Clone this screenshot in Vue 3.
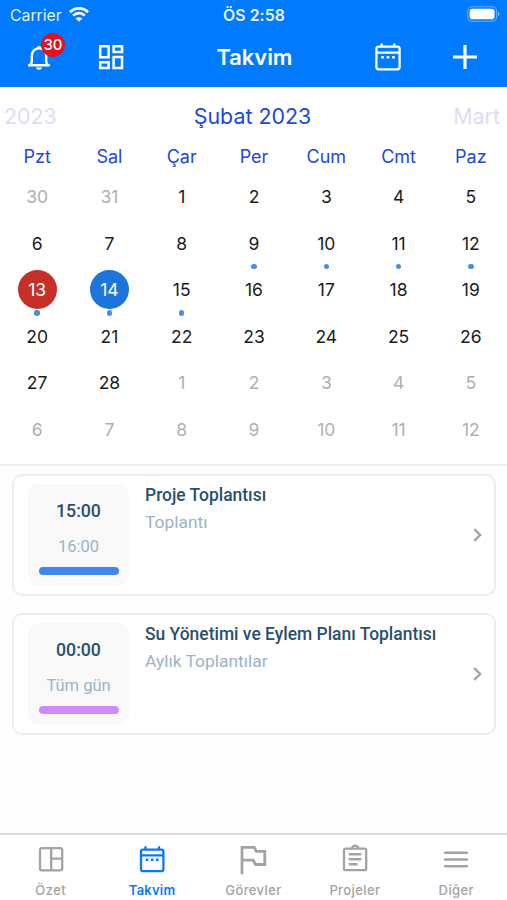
<script setup>
const weekdays = ['Pzt', 'Sal', 'Çar', 'Per', 'Cum', 'Cmt', 'Paz']

const range = (from, to) => Array.from({ length: to - from + 1 }, (_, i) => from + i)
const eventDays = [9, 10, 11, 12, 13, 14, 15]
const days = [
  ...range(30, 31).map((n) => ({ n, outside: true })),
  ...range(1, 28).map((n) => ({
    n,
    today: n === 13,
    selected: n === 14,
    dot: eventDays.includes(n),
  })),
  ...range(1, 12).map((n) => ({ n, outside: true })),
]

const events = [
  { start: '15:00', end: '16:00', title: 'Proje Toplantısı', kind: 'Toplantı', tone: 'blue' },
  { start: '00:00', end: 'Tüm gün', title: 'Su Yönetimi ve Eylem Planı Toplantısı', kind: 'Aylık Toplantılar', tone: 'violet' },
]

const tabs = [
  { id: 'summary', label: 'Özet' },
  { id: 'calendar', label: 'Takvim', active: true },
  { id: 'tasks', label: 'Görevler' },
  { id: 'projects', label: 'Projeler' },
  { id: 'more', label: 'Diğer' },
]
</script>

<template>
  <div class="screen">
    <header class="top">
      <div class="status">
        <div class="carrier">
          <span>Carrier</span>
          <svg class="wifi" width="20" height="15" viewBox="0 0 20 15" fill="none" stroke="#fff" stroke-width="2.7">
            <path d="M1 5.2C6 .2 14 .2 19 5.2M4.2 8.6c3.3-3.2 8.3-3.2 11.6 0" />
            <path d="M6.7 11.4c1.8-1.7 4.8-1.7 6.6 0L10 14.7z" fill="#fff" stroke="none" />
          </svg>
        </div>
        <span class="clock">ÖS 2:58</span>
        <svg class="battery" width="33" height="16" viewBox="0 0 33 16">
          <rect x=".8" y=".8" width="28.8" height="14.4" rx="4.4" fill="none" stroke="#fff" stroke-opacity=".4" stroke-width="1.1" />
          <rect x="2.6" y="2.8" width="25" height="10.4" rx="2.8" fill="#fff" />
          <path d="M31 5.7c1.9.7 1.9 3.9 0 4.6z" fill="#fff" fill-opacity=".45" />
        </svg>
      </div>
      <nav class="nav">
        <div class="bell">
          <svg width="24" height="28" viewBox="0 0 24 28" fill="none" stroke="#fff" stroke-width="2.4">
            <path d="M1.2 22.2h21.6M3.2 21.8c1.3-1 1.6-1.8 1.6-3.6v-5.6a7.2 7.4 0 0 1 14.4 0v5.6c0 1.8.3 2.6 1.6 3.6" />
            <path d="M9 24.4h6c-.4 3-5.6 3-6 0zM9.9 5a2.1 2.1 0 1 1 4.2 0z" fill="#fff" stroke="none" />
          </svg>
          <span class="badge">30</span>
        </div>
        <svg class="grid-icon" width="26" height="26" viewBox="0 0 26 26" fill="none" stroke="#fff" stroke-width="2.5">
          <path d="M2.2 2.2h8.4v11H2.2zM15.6 2.2H24v5.7h-8.4zM2.2 18.2h8.4v5.8H2.2zM15.6 13H24v11h-8.4z" />
        </svg>
        <h1>Takvim</h1>
        <svg class="cal-icon" width="26" height="30" viewBox="0 0 26 30" fill="none" stroke="#fff" stroke-width="2.3">
          <rect x="1.4" y="4.7" width="23.2" height="22.6" rx="2.2" />
          <path d="M1.4 10.7h23.2M6.7 1.4v3.4M19.3 1.4v3.4" />
          <path d="M6.3 15.2h2.7M11.7 15.2h2.7M17.1 15.2h2.7" stroke-width="2.6" />
        </svg>
        <svg class="plus" width="24" height="24" viewBox="0 0 24 24" stroke="#fff" stroke-width="3.2">
          <path d="M12 0v24M0 12h24" />
        </svg>
      </nav>
    </header>

    <section class="calendar">
      <div class="months">
        <span class="faded">2023</span>
        <span class="current">Şubat 2023</span>
        <span class="faded next">Mart</span>
      </div>
      <div class="weekdays">
        <span v-for="d in weekdays" :key="d">{{ d }}</span>
      </div>
      <div class="days">
        <div v-for="(d, i) in days" :key="i" class="day">
          <span class="num" :class="{ outside: d.outside, today: d.today, selected: d.selected }">{{ d.n }}</span>
          <i v-if="d.dot" class="dot"></i>
        </div>
      </div>
    </section>

    <main class="events">
      <article v-for="e in events" :key="e.title" class="card">
        <div class="time">
          <strong>{{ e.start }}</strong>
          <span>{{ e.end }}</span>
          <i class="bar" :class="e.tone"></i>
        </div>
        <div class="info">
          <h2>{{ e.title }}</h2>
          <p>{{ e.kind }}</p>
        </div>
        <svg class="chevron" width="9" height="14" viewBox="0 0 9 14" fill="none" stroke="#a3a3a3" stroke-width="2.3">
          <path d="M1.2 1.2 7.2 7l-6 5.8" />
        </svg>
      </article>
    </main>

    <footer class="tabs">
      <div v-for="t in tabs" :key="t.id" class="tab" :class="{ active: t.active }">
        <svg width="28" height="32" viewBox="0 0 28 32" fill="none" stroke="currentColor" stroke-width="2.3">
          <template v-if="t.id === 'summary'">
            <rect x="3" y="5.2" width="22.2" height="22.2" rx="1.8" />
            <path d="M14.2 5.2v22.2M14.2 15.7h11" />
          </template>
          <template v-else-if="t.id === 'calendar'">
            <rect x="3" y="6.6" width="22.4" height="21.6" rx="2" />
            <path d="M3 12.3h22.4M7.5 3.2v3.4M21 3.2v3.4" />
            <path d="M7.8 16.7h2.6M12.9 16.7h2.6M18 16.7h2.6" stroke-width="2.5" />
          </template>
          <path v-else-if="t.id === 'tasks'" d="M3 31.2V4.3h12.2l2.2 4h8.4v13.2h-9.2l-2.4-4.3H3" stroke-width="2.8" />
          <template v-else-if="t.id === 'projects'">
            <rect x="3" y="5.7" width="22.2" height="21.5" rx="1.8" />
            <path d="M11.2 5.2a2.9 2.6 0 0 1 5.8 0" />
            <path d="M7.7 11.3h12.6M7.7 16.3h12.6M7.7 21.3h8.8" stroke-width="2.5" />
          </template>
          <path v-else d="M3.1 9.8h21.8M3.1 16.5h21.8M3.1 23.2h21.8" stroke-linecap="round" stroke-width="2.4" />
        </svg>
        <span>{{ t.label }}</span>
      </div>
    </footer>
  </div>
</template>

<style>
body {
  margin: 0;
  background: #fff;
}
</style>

<style scoped>
.screen {
  width: 507px;
  height: 900px;
  display: flex;
  flex-direction: column;
  overflow: hidden;
  background: #fff;
  font-family: Inter, sans-serif;
}
.screen * {
  box-sizing: border-box;
}
.screen svg {
  display: block;
  flex: none;
}
.top {
  height: 87px;
  flex: none;
  background: #007aff;
  color: #fff;
}
.status {
  height: 30px;
  display: grid;
  grid-template-columns: 1fr auto 1fr;
  align-items: center;
  padding: 0 7px 0 10px;
  font-size: 15.8px;
}
.carrier {
  display: flex;
  align-items: center;
  gap: 7px;
  color: #e2f0ff;
}
.carrier svg {
  margin-top: -1px;
}
.clock {
  font-weight: 600;
  letter-spacing: 0.1px;
  color: #e9f4ff;
  margin-right: 2px;
}
.battery {
  justify-self: end;
  margin-top: -2px;
}
.nav {
  height: 57px;
  display: grid;
  grid-template-columns: 24px 26px 1fr 26px 24px;
  align-items: center;
  padding: 0 30px 3px 27px;
}
.bell {
  position: relative;
}
.badge {
  position: absolute;
  left: 14px;
  top: -10px;
  width: 24px;
  height: 24px;
  border-radius: 50%;
  background: #e3101b;
  font-size: 15px;
  font-weight: 500;
  line-height: 24px;
  text-align: center;
}
.grid-icon {
  margin-left: 47px;
}
h1 {
  margin: 0;
  justify-self: center;
  padding-left: 5px;
  font-size: 21.8px;
  line-height: 28px;
  font-weight: 600;
}
.cal-icon {
  margin-left: -52px;
}
.calendar {
  height: 379px;
  flex: none;
  border-bottom: 2px solid #f0f1f6;
}
.months {
  height: 50px;
  padding: 9px 7px 0 4px;
  display: grid;
  grid-template-columns: 1fr auto 1fr;
  align-items: start;
  font-size: 21.4px;
  line-height: 40px;
}
.current {
  color: #2148dc;
  padding-left: 1px;
}
.faded {
  color: #dcdcfa;
}
.next {
  text-align: right;
}
.weekdays,
.days {
  display: grid;
  grid-template-columns: repeat(7, 1fr);
  padding: 0 0 0 1px;
  text-align: center;
}
.weekdays {
  height: 36.7px;
  font-size: 18px;
  line-height: 39px;
  color: #2148dc;
}
.days {
  grid-auto-rows: 46.5px;
}
.day {
  position: relative;
  display: flex;
  align-items: center;
  justify-content: center;
}
.num {
  width: 39px;
  height: 39px;
  border-radius: 50%;
  font-size: 17.5px;
  line-height: 39px;
  color: #1c1c1c;
}
.num.outside {
  color: #b0b0b0;
}
.num.today {
  background: #c63029;
  color: #fff;
}
.num.selected {
  background: #1d75dc;
  color: #fff;
}
.dot {
  position: absolute;
  left: calc(50% - 2.75px);
  bottom: -2.5px;
  width: 5.5px;
  height: 5.5px;
  border-radius: 50%;
  background: #4a90d9;
}
.events {
  flex: 1;
  display: flex;
  flex-direction: column;
  gap: 17px;
  padding: 8px 11px 0 12px;
  background: #fefeff;
  font-family: Roboto, sans-serif;
}
.card {
  height: 122px;
  display: flex;
  border: 2px solid #eceef6;
  border-radius: 10px;
  background: #fff;
  padding: 8px 12px 0 14px;
}
.time {
  width: 101px;
  height: 102px;
  border-radius: 11px;
  background: #f9f9fa;
  display: flex;
  flex-direction: column;
  align-items: center;
}
.time strong {
  margin-top: 17px;
  font-size: 17.7px;
  line-height: 21px;
  font-weight: 500;
  color: #2b4f6c;
}
.time span {
  margin-top: 15px;
  font-size: 16.5px;
  line-height: 20px;
  color: #9db2ca;
}
.bar {
  width: 80px;
  height: 8px;
  margin-top: 10px;
  border-radius: 4px;
}
.bar.blue {
  background: #3f86ed;
}
.bar.violet {
  background: #d18afa;
}
.info {
  flex: 1;
  padding-left: 16px;
}
h2 {
  margin: 0;
  font-size: 17.45px;
  line-height: 22px;
  font-weight: 500;
  color: #2b4f6c;
}
p {
  margin: 5px 0 0;
  font-size: 17.4px;
  line-height: 22px;
  color: #9db2ca;
}
.chevron {
  margin-top: 44px;
}
.tabs {
  height: 67px;
  flex: none;
  border-top: 2px solid #dedede;
  display: grid;
  grid-template-columns: repeat(5, 1fr);
}
.tab {
  display: flex;
  flex-direction: column;
  align-items: center;
  padding-top: 8px;
  color: #a3a3a3;
  font-size: 13px;
  line-height: 18px;
  font-weight: 500;
  letter-spacing: 0.4px;
}
.tab span {
  margin-top: 6px;
}
.tab.active {
  color: #0b78f5;
  font-weight: 600;
}
.tab.active span {
  letter-spacing: 0.2px;
}
</style>
